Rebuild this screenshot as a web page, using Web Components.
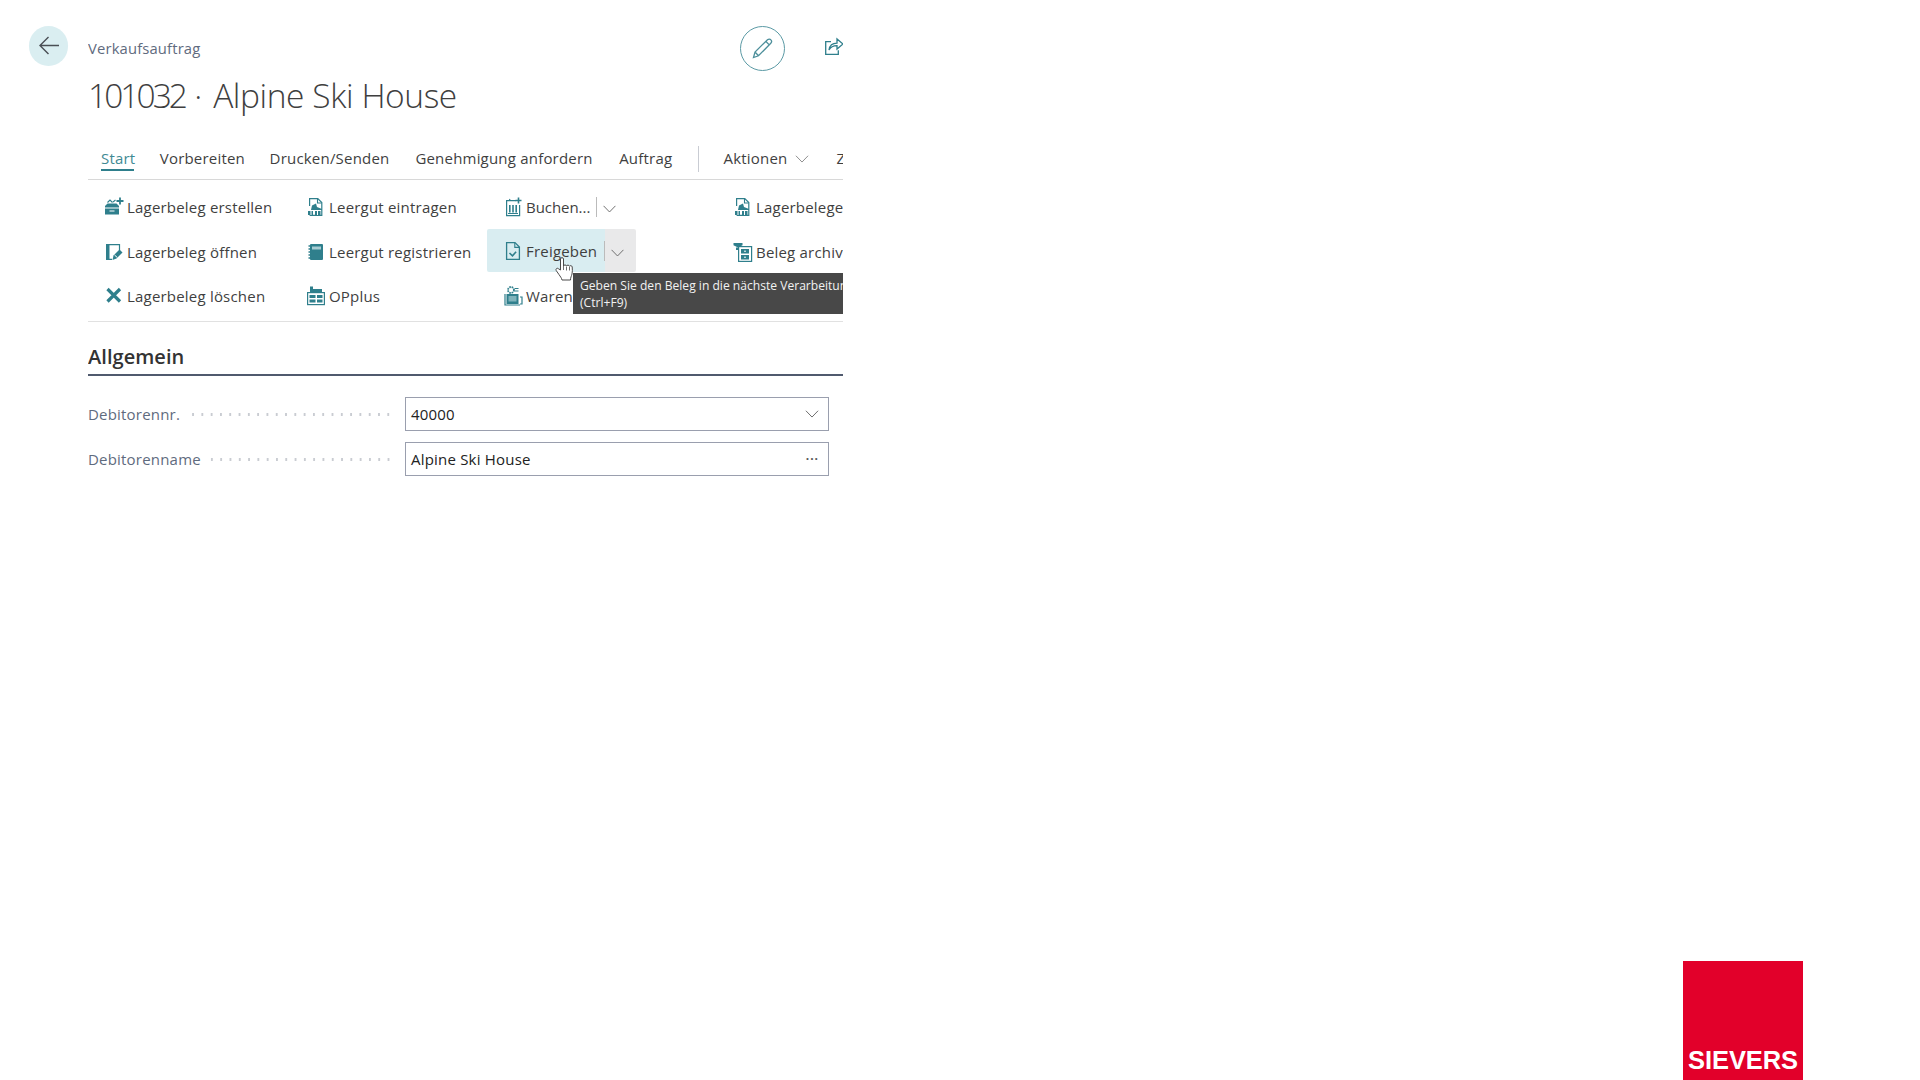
<!DOCTYPE html>
<html lang="de"><head><meta charset="utf-8"><title>Verkaufsauftrag</title>
<style>html,body{margin:0;padding:0;background:#fff}body{font-family:"Open Sans","Noto Sans",sans-serif;color:#3c3c3c}</style>
</head><body>
<sv-page>
  <sv-back slot="back"></sv-back>
  <sv-header slot="main" caption="Verkaufsauftrag" num="101032" name="Alpine Ski House"></sv-header>
  <sv-tabs slot="main">
    <sv-tab active w="33">Start</sv-tab><sv-tab w="84">Vorbereiten</sv-tab><sv-tab w="120">Drucken/Senden</sv-tab><sv-tab w="178">Genehmigung anfordern</sv-tab><sv-tab w="53">Auftrag</sv-tab>
    <sv-tab-sep></sv-tab-sep>
    <sv-tab w="65" chevron>Aktionen</sv-tab><sv-tab w="20">Zugehörig</sv-tab>
  </sv-tabs>
  <sv-actions slot="main">
    <sv-action icon="create">Lagerbeleg erstellen</sv-action>
    <sv-action icon="sheet">Leergut eintragen</sv-action>
    <sv-action icon="post" split="63" tight>Buchen...</sv-action>
    <sv-action icon="sheet">Lagerbelege</sv-action>
    <sv-action icon="open">Lagerbeleg öffnen</sv-action>
    <sv-action icon="book">Leergut registrieren</sv-action>
    <sv-action icon="release" split="71" hot>Freigeben</sv-action>
    <sv-action icon="archive">Beleg archivieren</sv-action>
    <sv-action icon="del">Lagerbeleg löschen</sv-action>
    <sv-action icon="opplus">OPplus</sv-action>
    <sv-action icon="goods">Warenausgang</sv-action>
    <sv-tooltip>Geben Sie den Beleg in die nächste Verarbeitungsstufe frei.<br>(Ctrl+F9)</sv-tooltip>
    <sv-cursor></sv-cursor>
  </sv-actions>
  <sv-section slot="main" title="Allgemein">
    <sv-field label="Debitorennr." value="40000" kind="chevron"></sv-field>
    <sv-field label="Debitorenname" value="Alpine Ski House" kind="dots"></sv-field>
  </sv-section>
  <sv-logo slot="logo">SIEVERS</sv-logo>
</sv-page>
<script>
const TEAL='#2f7f8c';
const ICONS={
 create:`<path fill="${TEAL}" d="M1 9 3.500 6.500h9L15 9v8.500H1z"/><path stroke="#fff" stroke-width="1.200" fill="none" d="M1 11h14M5.500 14h5"/><path fill="none" stroke="${TEAL}" stroke-width="1.100" d="M3.500 5.500l2.500-2.500 2.500 2.500M9 5l2.500-2"/><path stroke="${TEAL}" stroke-width="1.800" d="M16 .5v7M12.500 4h7"/>`,
 open:`<path fill="${TEAL}" d="M2 2h3.500v16H2z"/><path fill="none" stroke="${TEAL}" stroke-width="1.200" d="M5 2.600h10.500v6M5 17.400h3"/><path fill="${TEAL}" d="M8.500 18l1-4.500 6-6 3 3-6 6z"/><path stroke="#fff" d="M10.500 13l2.800 2.500"/>`,
 del:`<path stroke="${TEAL}" stroke-width="3.200" fill="none" d="M3.500 3 16 15.500M16 3 3.500 15.500"/>`,
 sheet:`<path fill="none" stroke="${TEAL}" stroke-width="1.200" d="M3.600 9V1.600h8.200l4 4V18.400H3.600"/><path fill="none" stroke="${TEAL}" stroke-width="1.100" d="M11.500 2v4h4"/><path fill="${TEAL}" d="M6 8.500l4-2 1 3.500 5 2v1H5z"/><path fill="${TEAL}" d="M2 14h5v4H2zM9 14h5.500v4H9z"/><path stroke="#fff" d="M5 14v4M11.500 14v4"/>`,
 book:`<rect x="4" y="2" width="13" height="16" rx="1" fill="${TEAL}"/><rect x="6" y="4.500" width="9" height="3" fill="#a8cdd3"/><path stroke="${TEAL}" stroke-width="1.300" d="M2.500 4h2M2.500 7h2M2.500 10h2M2.500 13h2M2.500 16h2"/>`,
 opplus:`<rect x="1.600" y="6.600" width="16.800" height="12" fill="none" stroke="${TEAL}" stroke-width="1.200"/><path fill="${TEAL}" d="M4 .5h3v2.500h9V6H4zM3.500 9h6v3h-6zM11 9h5.500v3H11zM3.500 13.500h6v3h-6zM11 13.500h5.500v3H11z"/>`,
 post:`<path fill="none" stroke="${TEAL}" stroke-width="1.200" d="M13 3.600H3.600v15h13V8"/><path fill="${TEAL}" d="M6 8h1.600v7.500H6zM9.200 8h1.600v7.500H9.200zM12.400 8H14v7.500h-1.600z"/><path fill="none" stroke="${TEAL}" d="M5 16.500h10M6 2l2 1.600"/><path stroke="${TEAL}" stroke-width="1.600" d="M15.500.5v6M12.500 3.500h6"/>`,
 release:`<path fill="none" stroke="${TEAL}" stroke-width="1.300" d="M3.600 18.400V1.600h8.400l4.400 4.400v12.400z"/><path fill="none" stroke="${TEAL}" stroke-width="1.100" d="M11.800 2v4.400h4.200"/><path fill="none" stroke="${TEAL}" stroke-width="1.600" d="M6.500 12l3 2.800 3.600-4"/>`,
 goods:`<rect x="3.500" y="8" width="12" height="10" fill="${TEAL}"/><rect x="5.500" y="10" width="8" height="5.500" fill="#7fb3bb"/><path fill="none" stroke="${TEAL}" stroke-width="1.200" d="M2 8v11h15M17 11h2v7h-2"/><circle cx="8" cy="4" r="3" fill="none" stroke="${TEAL}" stroke-width="1.800" stroke-dasharray="1.600 .8"/><path stroke="${TEAL}" stroke-width="1.200" d="M12 2.500h3.500M12 5h3.500"/>`,
 archive:`<rect x="5.600" y="4.600" width="13" height="14.800" fill="none" stroke="${TEAL}" stroke-width="1.200"/><path fill="${TEAL}" d="M.5 1h9v2.200L5 5.500.5 3.200z"/><path fill="${TEAL}" d="M3 5.500h2V8H3zM8 7h8v4.500H8zM8 13h8v4.500H8z"/><path stroke="#fff" d="M11 9.200h2M11 15.200h2"/>`
};
function def(name,html,init){customElements.define(name,class extends HTMLElement{
  constructor(){super();this.attachShadow({mode:'open'});}
  connectedCallback(){this.shadowRoot.innerHTML=typeof html==='function'?html(this):html;if(init)init(this);}
});}
const CHEV=(w,c)=>`<svg width="${w}" height="${Math.round(w*.6)}" viewBox="0 0 14 8.400" fill="none" stroke="${c}" stroke-width="1"><path d="M.6.8 7 7.400 13.400.8"/></svg>`;
const TXT='font-size:15px;letter-spacing:.2px;';

def('sv-page',`<style>
:host{display:flex;flex-direction:column;width:1920px;height:1080px;overflow:hidden}
.row{display:flex;flex:1;min-height:0}
.gut{width:88px;flex:none}
.main{width:755px;flex:none;overflow:hidden;position:relative}
.logo{display:flex;justify-content:flex-end;padding-right:117px}
</style><div class="row"><div class="gut"><slot name="back"></slot></div><div class="main"><slot name="main"></slot><slot></slot></div></div><div class="logo"><slot name="logo"></slot></div>`);

def('sv-back',`<style>
:host{display:flex;align-items:center;justify-content:center;width:39.500px;height:39.500px;border-radius:50%;background:#daeef1;margin:26px 0 0 28.800px}
</style><svg width="22" height="20" viewBox="0 0 22 20" fill="none" stroke="#4a4f55" stroke-width="1.400"><path d="M21 9.500H2M10.500 1 2 9.500l8.500 8.500"/></svg>`);

def('sv-header',h=>`<style>
:host{display:block;position:relative;height:145px}
.cap{position:absolute;left:0;top:37px;font-size:14.800px;line-height:22px;color:#5f6b7e;letter-spacing:.15px;white-space:nowrap}
h1{position:absolute;left:0;top:71px;margin:0;font-weight:300;font-size:33.500px;line-height:48px;color:#3f3f3f;letter-spacing:-.42px;white-space:nowrap}
.n{letter-spacing:-2.950px}
.dot{margin:0 3px 0 1px}
.btns{position:absolute;left:652px;top:26px;display:flex;align-items:center;gap:40px;height:45px}
.ed{box-sizing:border-box;width:45px;height:45px;border-radius:50%;border:1.300px solid #5b9aa5;display:flex;align-items:center;justify-content:center}
</style><div class="cap">${h.getAttribute('caption')}</div><h1><span class="n">${h.getAttribute('num')}</span> <span class="dot">·</span> ${h.getAttribute('name')}</h1>
<div class="btns"><div class="ed"><svg width="21" height="21" viewBox="0 0 21 21" fill="none" stroke="#4d8f9b" stroke-width="1.300"><path d="M1.500 19.500 3 14 15.500 1.800c1-1 2.600-1 3.400.1.900 1 .8 2.400-.1 3.300L6.500 17.800zM3 14l3.500 3.800M14 3.500l3.500 3.600"/></svg></div>
<svg width="18" height="18" viewBox="0 0 18 18" fill="none" stroke="${TEAL}" stroke-width="1.300" style="margin-top:-5px"><path d="M6 4.600H.7v12.700h12.600v-4"/><path d="M4 13c.6-4.300 3.400-6.800 8-6.800V2L18 7l-6 5V8.600C8 8.500 5.500 10.300 4 13z"/></svg></div>`);

def('sv-tabs',`<style>
:host{display:flex;align-items:flex-start;height:35px;padding:.5px 0 0 13px;box-sizing:border-box;border-bottom:1.500px solid #d8d8d8;white-space:nowrap}
</style><slot></slot>`);
def('sv-tab',h=>{const w=h.getAttribute('w');const a=h.hasAttribute('active');const c=h.hasAttribute('chevron');return `<style>
:host{display:flex;align-items:flex-start;margin-right:${c?27:25.800}px;flex:none}
.t{display:inline-block;width:${w}px;height:23.500px;line-height:24px;${TXT}color:${a?'#3f8a94':'#3f3f3f'};${a?`border-bottom:2px solid ${TEAL};`:''}}
svg{margin:9px 0 0 7px}
</style><span class="t"><slot></slot></span>${c?CHEV(14,'#8a8a8a'):''}`});
def('sv-tab-sep',`<style>:host{display:block;flex:none;width:1.500px;height:26px;background:#c9ccd3;margin:0 24px 0 0}</style>`);

def('sv-actions',`<style>
:host{display:grid;position:relative;grid-template-columns:201px 197px 230px 130px;grid-auto-rows:44.600px;padding:5px 0 0 1px;border-bottom:1.500px solid #e1e1e1;height:141.500px;box-sizing:border-box}
</style><slot></slot>`);
def('sv-action',h=>{const s=h.getAttribute('split');const hot=h.hasAttribute('hot');const ic=h.getAttribute('icon');return `<style>
:host{display:flex;align-items:center;height:${hot?'43px':'44.600px'};box-sizing:border-box;padding-left:16px;margin-left:${['create','open','del'].includes(ic)?-1:0}px;white-space:nowrap;${TXT}${h.hasAttribute('tight')?'letter-spacing:-.05px;':''}color:#3f3f3f;position:relative;${hot?`top:-.6px;background:linear-gradient(90deg,#d9edf1 118px,#e9e9ea 118px);width:149px;border-radius:2px;`:''}}
svg.i{flex:none;margin-right:3px;width:20px;height:20px}
.sep{width:1px;height:20px;background:#bbb;margin:0 6px 0 7px;flex:none}
.l{display:inline-block;${s?`width:${s}px;`:''}}
.c{flex:none;display:block}
</style><svg class="i" viewBox="0 0 20 20">${ICONS[ic]}</svg><span class="l"><slot></slot></span>${s?`<span class="sep"></span><span class="c">${CHEV(13,'#666')}</span>`:''}`});
def('sv-tooltip',`<style>
:host{position:absolute;left:485px;top:93px;width:280px;height:41px;box-sizing:border-box;padding:3.500px 0 0 7px;background:#484848;color:#f2f2f2;font-size:12.100px;line-height:17px;white-space:nowrap;z-index:2}
</style><slot></slot>`);
def('sv-cursor',`<style>
:host{position:absolute;left:467px;top:75.500px;width:20px;height:27px;z-index:3}
</style><svg width="20" height="27" viewBox="0 0 20 27"><path d="M5.500 14V3c0-1.800 3-1.800 3 0v7c.3-1.400 2.700-1.400 3 0 .3-1.200 2.700-1.200 3 .3.4-1 2.500-.9 2.700.6.200 2.500.3 5-.2 7.100-.5 2.100-1.500 3.400-1.500 6H7c-.4-2-1.700-3.500-3-5.400L1.200 14.500c-1-1.900 1.300-3 2.500-1.600z" fill="#fff" stroke="#4a4a4a" stroke-width="1"/><path d="M8.500 10v4M11.500 10.500v4M14.500 11v3.500" stroke="#4a4a4a" stroke-width=".8" fill="none"/></svg>`);

def('sv-section',h=>`<style>
:host{display:block}
h2{margin:0;height:54.500px;box-sizing:border-box;padding-top:20.500px;font-size:20px;line-height:30px;font-weight:600;color:#333;letter-spacing:.05px;border-bottom:2px solid #505a6e}
.b{padding-top:21px;display:flex;flex-direction:column;gap:11px}
</style><h2>${h.getAttribute('title')}</h2><div class="b"><slot></slot></div>`);
def('sv-field',h=>`<style>
:host{display:grid;grid-template-columns:317px 424px;height:34px;align-items:center}
.lab{display:flex;align-items:center;gap:8px;padding-right:12px;${TXT}color:#5f6b7e}
.dots{flex:1;height:3px;background:radial-gradient(circle at center,#c9ccd2 1.100px,transparent 1.400px) right center/9.300px 3px repeat-x}
.inp{box-sizing:border-box;height:34px;border:1.300px solid #9a9fae;display:flex;align-items:center;justify-content:space-between;padding:0 9px 0 5px;${TXT}color:#222}
.d{font-weight:700;letter-spacing:1px;color:#555;font-size:12px;line-height:12px;margin-top:-1px}
</style><div class="lab"><span>${h.getAttribute('label')}</span><span class="dots"></span></div>
<div class="inp"><span>${h.getAttribute('value')}</span>${h.getAttribute('kind')==='chevron'?CHEV(14,'#666'):'<span class="d">···</span>'}</div>`);
def('sv-logo',`<style>
:host{display:flex;align-items:flex-end;justify-content:center;width:120px;height:119px;background:#e2002a;box-sizing:border-box;padding-bottom:6px;color:#fff;font:700 25.500px/28px "Liberation Sans",sans-serif;letter-spacing:-.1px}
</style><slot></slot>`);
</script>
</body></html>
